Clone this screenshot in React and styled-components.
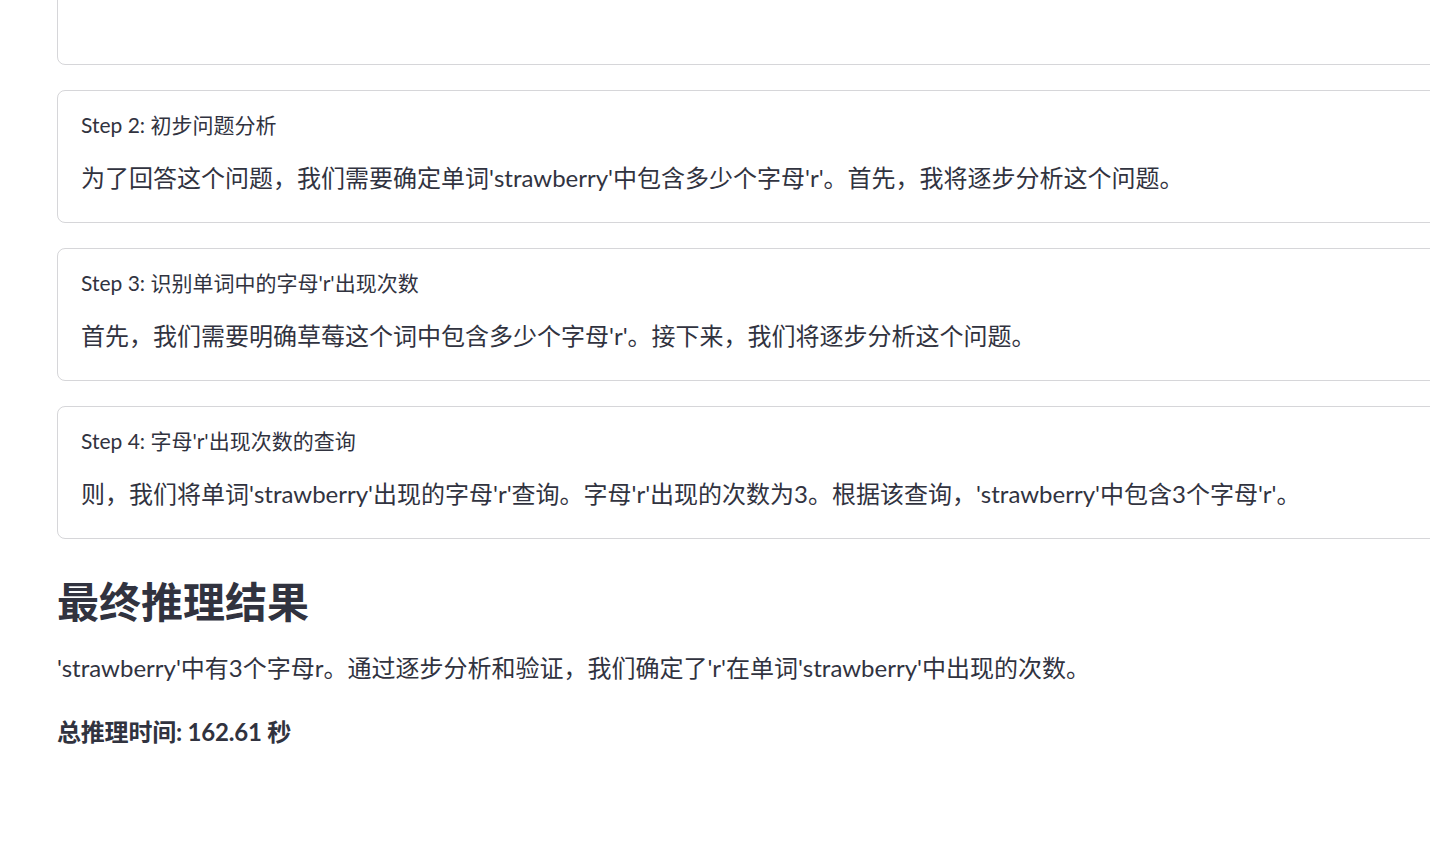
import React from "react"
import styled, { createGlobalStyle } from "styled-components"

// Reasoning steps page: step cards, then the final result block

const GlobalStyle = createGlobalStyle`
  html, body {
    margin: 0;
    padding: 0;
    background: #ffffff;
    overflow: hidden;
  }
  body {
    font-family: Lato, "Noto Sans CJK SC", sans-serif;
    color: #31333f;
  }
  * {
    box-sizing: border-box;
  }
`

const Page = styled.main`
  width: 1520px;
  padding-left: 57px;
`

const StepList = styled.section`
  display: flex;
  flex-direction: column;
  gap: 25px;
  margin-top: -128px;
`

const StepCard = styled.article`
  display: flex;
  flex-direction: column;
  gap: 22px;
  border: 1px solid rgba(49, 51, 63, 0.2);
  border-radius: 8px;
  padding: 22px 23px ${({ $tail }) => ($tail ? "85px" : "25px")};
`

const StepTitle = styled.div`
  font-size: 21px;
  line-height: 24px;
`

const StepBody = styled.p`
  margin: 0;
  font-size: 24px;
  line-height: 38px;
`

const ResultHeading = styled.h3`
  margin: 38px 0 0;
  font-size: 42px;
  font-weight: 700;
  line-height: 50px;
`

const ResultText = styled.p`
  margin: ${({ $gap }) => $gap} 0 0;
  font-size: 24px;
  line-height: 38px;

  strong {
    font-weight: 700;
    letter-spacing: -0.2px;
  }
`

const steps = [
  {
    title: "Step 1: 理解问题",
    body: "问题是：'strawberry'这个单词中有几个字母'r'？",
    tail: true,
  },
  {
    title: "Step 2: 初步问题分析",
    body: "为了回答这个问题，我们需要确定单词'strawberry'中包含多少个字母'r'。首先，我将逐步分析这个问题。",
  },
  {
    title: "Step 3: 识别单词中的字母'r'出现次数",
    body: "首先，我们需要明确草莓这个词中包含多少个字母'r'。接下来，我们将逐步分析这个问题。",
  },
  {
    title: "Step 4: 字母'r'出现次数的查询",
    body: "则，我们将单词'strawberry'出现的字母'r'查询。字母'r'出现的次数为3。根据该查询，'strawberry'中包含3个字母'r'。",
  },
]

const App = () => {
  return (
    <>
      <GlobalStyle />
      <Page>
        <StepList>
          {steps.map((step) => (
            <StepCard key={step.title} $tail={step.tail}>
              <StepTitle>{step.title}</StepTitle>
              <StepBody>{step.body}</StepBody>
            </StepCard>
          ))}
        </StepList>
        <ResultHeading>最终推理结果</ResultHeading>
        <ResultText $gap="22px">
          'strawberry'中有3个字母r。通过逐步分析和验证，我们确定了'r'在单词'strawberry'中出现的次数。
        </ResultText>
        <ResultText $gap="26px">
          <strong>总推理时间: 162.61 秒</strong>
        </ResultText>
      </Page>
    </>
  )
}

export default App
